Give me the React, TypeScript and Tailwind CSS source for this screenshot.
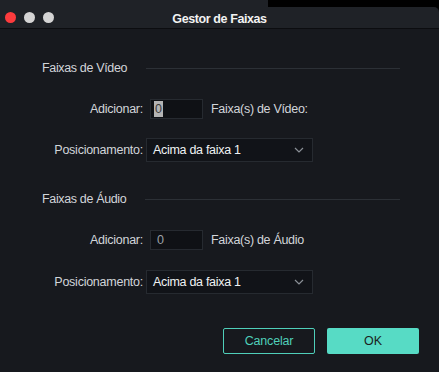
const font = "font-['Liberation_Sans',Arial,sans-serif]";

const Chevron = () => (
  <svg width="10" height="6" viewBox="0 0 10 6" fill="none">
    <path d="M1 1l4 4 4-4" stroke="#8a8f96" strokeWidth="1.2" />
  </svg>
);

const SectionHeader = ({ title }: { title: string }) => (
  <div className="flex items-center h-[14px] pl-[42px] pr-[39px]">
    <span className="text-[12.5px] tracking-[-0.35px] text-[#d2d5da] whitespace-nowrap">{title}</span>
    <div className="flex-1 h-px bg-[#2c3036] ml-[19px]" />
  </div>
);

const Label = ({ children }: { children: string }) => (
  <span className="w-[143px] text-right text-[12.5px] tracking-[-0.25px] text-[#d2d5da] whitespace-nowrap">
    {children}
  </span>
);

const Select = () => (
  <div className="ml-[3px] w-[167px] h-[24px] flex items-center justify-between pl-[6px] pr-[8px] bg-[#111318] border border-[#262a30]">
    <span className="text-[12.5px] tracking-[-0.3px] text-[#f0f2f4]">Acima da faixa 1</span>
    <Chevron />
  </div>
);

const App = () => {
  return (
    <div className={`${font} w-[439px] h-[372px] bg-[#17191e] flex flex-col overflow-hidden`}>
      {/* title bar */}
      <div className="relative h-[29px] bg-[#1f2227] border-b border-[#0c0d10] flex items-center pt-[6px] px-[5px]">
        <div className="absolute top-0 right-0 w-[171px] h-[7px] bg-black" />
        <div className="absolute top-[7px] right-0 w-[5px] h-[5px] bg-black">
          <div className="w-[5px] h-[5px] bg-[#1f2227] rounded-tr-[5px]" />
        </div>
        <div className="flex gap-[8px]">
          <div className="w-[11px] h-[11px] rounded-full bg-[#fd3b3d]" />
          <div className="w-[11px] h-[11px] rounded-full bg-[#d4d4d4]" />
          <div className="w-[11px] h-[11px] rounded-full bg-[#d4d4d4]" />
        </div>
        <span className="absolute left-0 right-0 top-[10px] text-center text-[12.5px] font-bold tracking-[-0.4px] text-[#f2f2f2]">
          Gestor de Faixas
        </span>
      </div>

      <div className="flex flex-col pt-[32px]">
        <SectionHeader title="Faixas de Vídeo" />

        <div className="flex items-center mt-[24px] h-[20px]">
          <Label>Adicionar:</Label>
          <div className="ml-[7px] w-[53px] h-[20px] bg-[#0f1115] border border-[#262a30] flex items-center pl-[3px]">
            <span className="bg-[#b4b4b4] text-[#3a3a3a] text-[12.5px] leading-[16px] px-[1px]">0</span>
          </div>
          <span className="ml-[8px] text-[12.5px] tracking-[-0.3px] text-[#d2d5da]">Faixa(s) de Vídeo:</span>
        </div>

        <div className="flex items-center mt-[19px] h-[24px]">
          <Label>Posicionamento:</Label>
          <Select />
        </div>

        <div className="mt-[30px]">
          <SectionHeader title="Faixas de Áudio" />
        </div>

        <div className="flex items-center mt-[24px] h-[20px]">
          <Label>Adicionar:</Label>
          <div className="ml-[7px] w-[53px] h-[20px] bg-[#0f1115] border border-[#262a30] flex items-center pl-[6px]">
            <span className="text-[#9ca1a8] text-[12.5px]">0</span>
          </div>
          <span className="ml-[8px] text-[12.5px] tracking-[-0.3px] text-[#d2d5da]">Faixa(s) de Áudio</span>
        </div>

        <div className="flex items-center mt-[20px] h-[24px]">
          <Label>Posicionamento:</Label>
          <Select />
        </div>

        <div className="flex justify-end gap-[12px] mt-[34px] pr-[20px]">
          <button className="w-[92px] h-[26px] rounded-[2px] border border-[#4fcfba] text-[#4fcfba] text-[12.5px] tracking-[-0.2px]">
            Cancelar
          </button>
          <button className="w-[92px] h-[26px] rounded-[2px] bg-[#57dbc5] text-[#1b1f22] text-[12.5px]">
            OK
          </button>
        </div>
      </div>
    </div>
  );
};

export default App;
